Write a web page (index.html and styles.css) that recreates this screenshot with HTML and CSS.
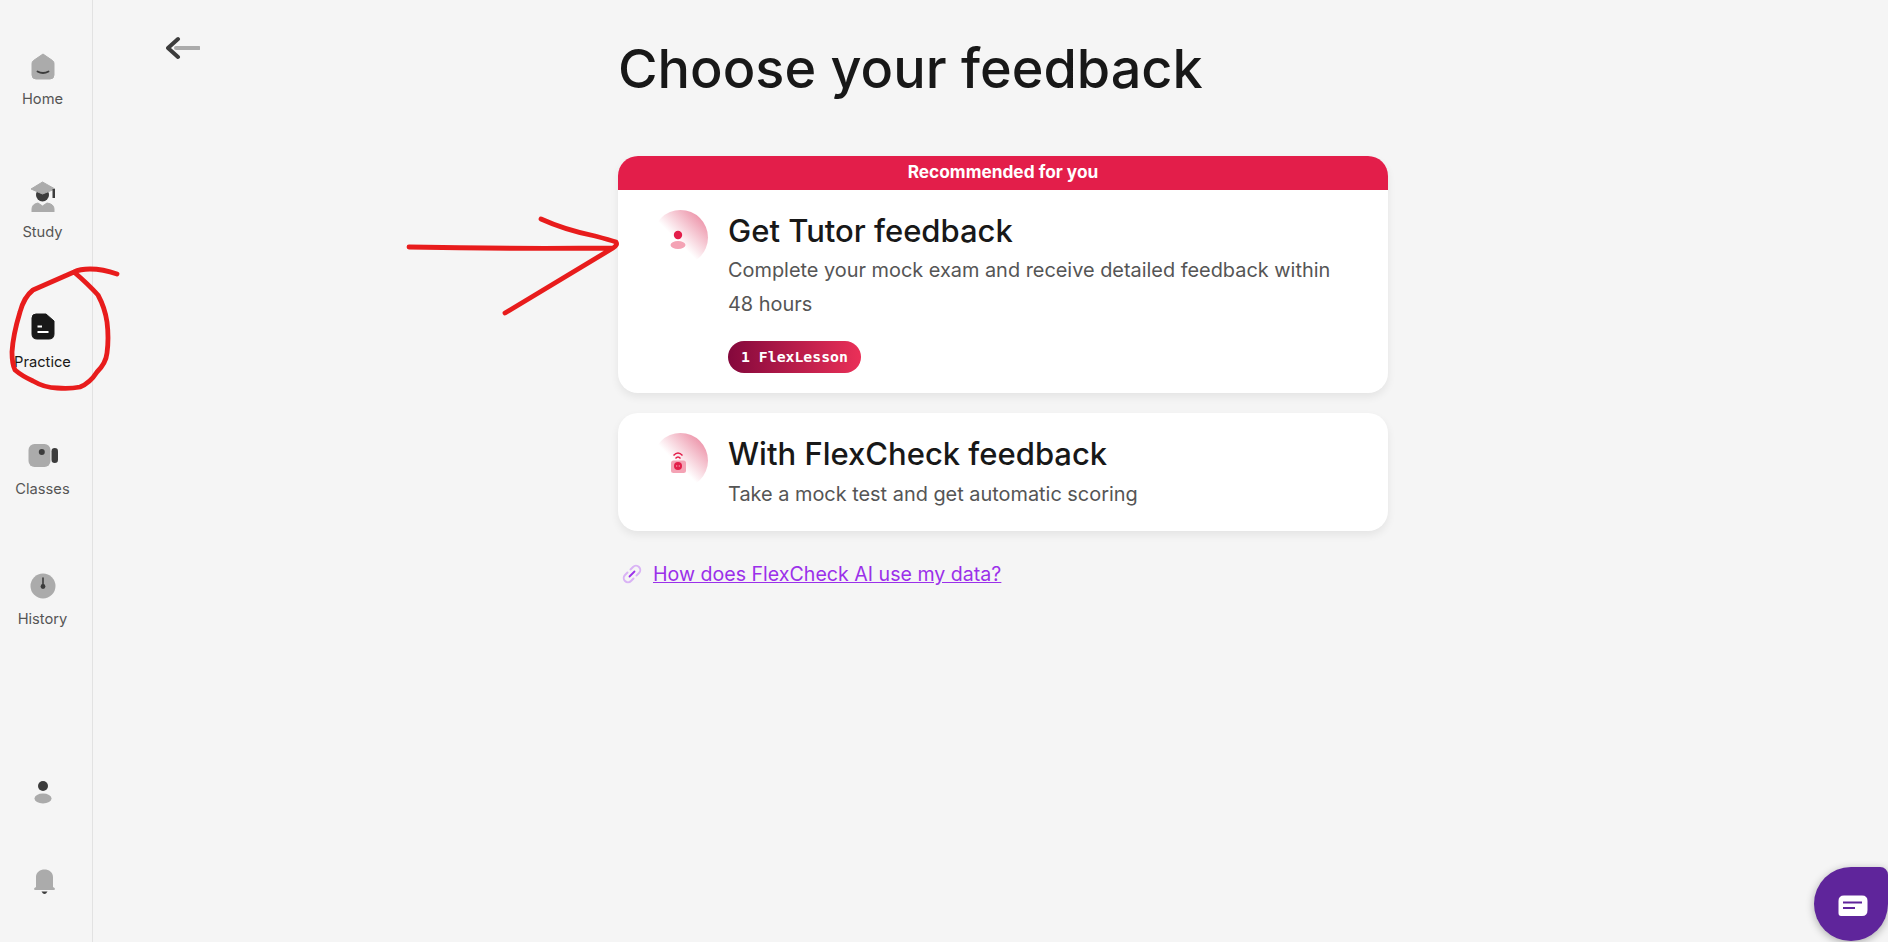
FILE: index.html
```html
<!DOCTYPE html>
<html lang="en">
<head>
  <meta charset="UTF-8">
  <meta name="viewport" content="width=device-width, initial-scale=1.0">
  <title>Choose your feedback</title>
  <link rel="stylesheet" href="styles.css">
</head>
<body>
  <aside class="sidebar">
    <nav class="nav-main">
      <a class="nav-item" href="#">
        <svg class="nav-icon" viewBox="0 0 32 32"><path d="M16 4 L25.500 10.500 Q27 11.500 27 13.500 V25 Q27 29 23 29 H9 Q5 29 5 25 V13.500 Q5 11.500 6.500 10.500 Z" fill="#ababab" stroke="#ababab" stroke-linejoin="round"/><path d="M10.500 21.500 Q16 24.500 21.500 21.500" fill="none" stroke="#3c3c3c" stroke-width="1.800" stroke-linecap="round"/></svg>
        <span>Home</span>
      </a>
      <a class="nav-item nav-item-low" href="#">
        <svg class="nav-icon" viewBox="0 0 32 32"><circle cx="15.500" cy="15" r="6.500" fill="#3c3c3c"/><path d="M4 9 L15.500 2 L28 9 L15.500 14 Z" fill="#ababab" stroke="#ababab" stroke-linejoin="round"/><rect x="25.500" y="9" width="2.500" height="9" fill="#3c3c3c"/><path d="M5 32 V29 Q5 24 11 23 L15.500 26 L20 23 Q27 24 27 29 V32 Z" fill="#ababab" stroke="#ababab" stroke-linejoin="round"/></svg>
        <span>Study</span>
      </a>
      <a class="nav-item nav-item-low active" href="#">
        <svg class="nav-icon" viewBox="0 0 32 32"><path d="M9 4 H19 L27 11 V24 Q27 29 22 29 H10 Q5 29 5 24 V8 Q5 4 9 4 Z" fill="#181818" stroke="#181818" stroke-linejoin="round"/><path d="M10.500 16.500 H15 M10.500 22 H21.500" stroke="#fff" stroke-width="1.800"/></svg>
        <span>Practice</span>
      </a>
      <a class="nav-item" href="#">
        <svg class="nav-icon" viewBox="0 0 32 32"><rect x="1.500" y="4" width="22" height="23" rx="6" fill="#ababab"/><circle cx="14.800" cy="12" r="3" fill="#3c3c3c"/><rect x="24.500" y="8" width="6.500" height="15" rx="3.250" fill="#3c3c3c"/></svg>
        <span>Classes</span>
      </a>
      <a class="nav-item" href="#">
        <svg class="nav-icon" viewBox="0 0 32 32"><circle cx="16" cy="16" r="12.500" fill="#ababab"/><path d="M16 8 V16" stroke="#3c3c3c" stroke-width="1.600" stroke-linecap="round"/><circle cx="16" cy="16.500" r="2.400" fill="#3c3c3c"/></svg>
        <span>History</span>
      </a>
    </nav>
    <div class="nav-bottom">
      <a class="nav-item" href="#">
        <svg class="nav-icon" viewBox="0 0 32 32"><circle cx="16" cy="9" r="5" fill="#3c3c3c"/><ellipse cx="16" cy="21.500" rx="8.500" ry="5" fill="#ababab"/></svg>
      </a>
      <a class="nav-item" href="#">
        <svg class="nav-icon" viewBox="0 0 32 32"><path d="M9 23 V13 C9 3 26 3 26 13 V23 Q28 24 28 25 Q28 26 26.500 26 H8.500 Q7 26 7 25 Q7 24 9 23 Z" fill="#ababab"/><path d="M14.500 27.500 H20.500 Q19 30 17.500 30 Q16 30 14.500 27.500 Z" fill="#3c3c3c"/></svg>
      </a>
    </div>
  </aside>

  <main class="main">
    <a class="back" href="#">
      <svg viewBox="0 0 34 24" width="34" height="24"><path d="M10 12 H33" stroke="#ababab" stroke-width="4" stroke-linecap="round"/><path d="M12 3 L2 12 L12 21" fill="none" stroke="#3c3c3c" stroke-width="4" stroke-linecap="round" stroke-linejoin="round"/></svg>
    </a>

    <div class="content">
      <h1>Choose your feedback</h1>

      <div class="card">
        <div class="card-banner">Recommended for you</div>
        <div class="card-body">
          <div class="card-icon">
            <svg viewBox="0 0 56 56" width="56" height="56"><circle cx="25" cy="25" r="4.200" fill="#e31e4a"/><ellipse cx="25" cy="35" rx="7.500" ry="4" fill="#f4a3b5"/></svg>
          </div>
          <div class="card-text">
            <h2>Get Tutor feedback</h2>
            <p>Complete your mock exam and receive detailed feedback within 48 hours</p>
            <span class="badge">1 FlexLesson</span>
          </div>
        </div>
      </div>

      <div class="card">
        <div class="card-body card-body-short">
          <div class="card-icon">
            <svg viewBox="0 0 56 56" width="56" height="56"><rect x="18" y="27.500" width="15" height="12.500" rx="2.500" fill="#f4a3b5"/><circle cx="25" cy="33" r="4" fill="#e31e4a"/><circle cx="23.700" cy="33" r="0.700" fill="#f4a3b5"/><circle cx="26.300" cy="33" r="0.700" fill="#f4a3b5"/><path d="M20.500 22.500 Q25 17.500 29.500 22.500 M22.500 25.500 Q25 22.500 27.500 25.500" fill="none" stroke="#e31e4a" stroke-width="1.400"/></svg>
          </div>
          <div class="card-text">
            <h2>With FlexCheck feedback</h2>
            <p>Take a mock test and get automatic scoring</p>
          </div>
        </div>
      </div>

      <div class="data-link">
        <svg viewBox="0 0 20 20" width="20" height="20"><path d="M8.500 5.500 L11 3 A4 4 0 0 1 17 9 L14.500 11.500 M11.500 14.500 L9 17 A4 4 0 0 1 3 11 L5.500 8.500" fill="none" stroke="#d9b3f5" stroke-width="2" stroke-linecap="round"/><path d="M7.500 12.500 L12.500 7.500" stroke="#9b30ea" stroke-width="1.800" stroke-linecap="round"/></svg>
        <a href="#">How does FlexCheck AI use my data?</a>
      </div>
    </div>
  </main>

  <svg class="scribble" viewBox="0 0 1888 942" width="1888" height="942">
    <path d="M117 274 Q103 269 90 269 Q80 269 74 272 L33 290 Q24 297 20 312 Q13 335 12 352 Q12 364 15 370 Q22 376 33 381 Q45 388 57 388 Q70 389 80 387 Q90 383 97 372 Q106 363 107 353 Q109 338 107 322 Q105 308 98 295 Q88 284 74 272" />
    <path d="M409 247 Q510 249 613 248 M541 219 Q565 230 595 236 Q610 240 616 242 Q618 245 613 248 Q560 280 505 313" />
  </svg>

  <button class="chat-btn" type="button">
    <svg viewBox="0 0 30 22" width="30" height="22"><path d="M6 0.500 H24 Q29.500 0.500 29.500 6 V15 Q29.500 21 24 21 H3 Q0.500 21 0.500 18 V6 Q0.500 0.500 6 0.500 Z" fill="#fff"/><path d="M5 7.500 H24 M5 13 H17" stroke="#5f259b" stroke-width="2.200"/></svg>
  </button>
</body>
</html>
```

FILE: styles.css
```css
* {
  box-sizing: border-box;
}

body {
  margin: 0;
  height: 942px;
  overflow: hidden;
  display: flex;
  background-color: #f5f5f5;
  font-family: Inter, Lato, sans-serif;
  color: #181818;
}

a {
  color: inherit;
  text-decoration: none;
}

.sidebar {
  width: 93px;
  flex-shrink: 0;
  display: flex;
  flex-direction: column;
  justify-content: space-between;
  padding: 50px 7px 46px 0;
  border-right: 1px solid #e2e2e2;
}

.nav-main {
  display: flex;
  flex-direction: column;
}

.nav-item {
  height: 130px;
  display: flex;
  flex-direction: column;
  align-items: center;
  gap: 7px;
  font-size: 14.700px;
  line-height: 20px;
  color: #555;
}

.nav-item-low {
  gap: 10px;
}

.nav-item.active {
  color: #181818;
}

.nav-icon {
  width: 32px;
  height: 32px;
}

.nav-bottom {
  display: flex;
  flex-direction: column;
  gap: 55px;
}

.nav-bottom .nav-item {
  height: 32px;
}

.main {
  flex: 1;
  display: flex;
  padding-left: 73px;
}

.back {
  width: 34px;
  height: 24px;
  margin-top: 36px;
}

.content {
  width: 770px;
  margin-left: 418px;
}

h1 {
  margin: 34px 0 0;
  height: 70px;
  font-size: 54px;
  line-height: 70px;
  font-weight: 500;
  color: #181818;
}

.card {
  margin-top: 20px;
  background: #fff;
  border-radius: 20px;
  box-shadow: 0 4px 8px rgba(0, 0, 0, 0.07);
  overflow: hidden;
}

h1 + .card {
  margin-top: 52px;
}

.card-banner {
  height: 34px;
  background-color: #e31e4a;
  color: #fff;
  text-align: center;
  font-size: 17.300px;
  line-height: 32px;
  font-weight: 700;
}

.card-body {
  display: flex;
  gap: 20px;
  padding: 20px 30px 20px 35px;
}

.card-body-short {
  padding-bottom: 20px;
}

.card-icon {
  width: 55px;
  height: 55px;
  flex-shrink: 0;
  border-radius: 50%;
  background: linear-gradient(225deg, #ee9cb0 15%, #fff 56%);
}

.card-text {
  flex: 1;
}

h2 {
  margin: 0;
  font-size: 31px;
  line-height: 42px;
  font-weight: 500;
  color: #181818;
}

.card-text p {
  margin: 1px 0 0;
  font-size: 19.900px;
  line-height: 34px;
  color: #555;
}

.card-body-short p {
  margin-top: 2px;
}

.badge {
  display: inline-block;
  margin-top: 20px;
  padding: 0 13px;
  height: 32px;
  border-radius: 16px;
  background: linear-gradient(90deg, #84083c, #ea3058);
  color: #fff;
  font-family: "DejaVu Sans Mono", monospace;
  font-size: 14.800px;
  line-height: 32px;
  font-weight: 700;
}

.data-link {
  display: flex;
  align-items: center;
  gap: 11px;
  margin-top: 30px;
  padding-left: 4px;
  font-size: 19.600px;
  line-height: 26px;
}

.data-link a {
  color: #9b30ea;
  text-decoration: underline;
}

/* hand drawn marks on top of the page */
.scribble {
  position: absolute;
  left: 0;
  top: 0;
  pointer-events: none;
}

.scribble path {
  fill: none;
  stroke: #e81c1c;
  stroke-width: 4.800;
  stroke-linecap: round;
  stroke-linejoin: round;
}

.chat-btn {
  position: fixed;
  right: 0;
  bottom: 1px;
  width: 74px;
  height: 74px;
  padding: 3px 0 0 3px;
  border: none;
  border-radius: 38px 8px 38px 38px;
  background-color: #5f259b;
  box-shadow: 0 2px 8px rgba(0, 0, 0, 0.3);
  display: flex;
  align-items: center;
  justify-content: center;
}
```
